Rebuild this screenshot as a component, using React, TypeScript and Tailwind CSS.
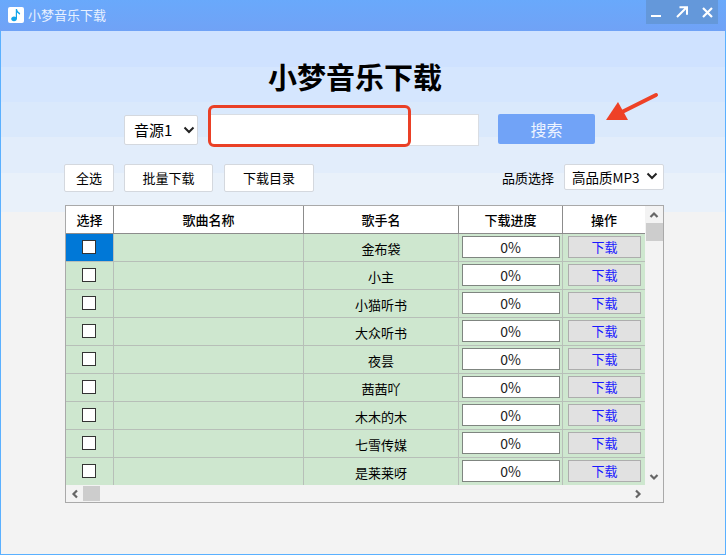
const font = { fontFamily: '"Noto Sans CJK SC", "Liberation Sans", sans-serif' };

const singers = ["金布袋", "小主", "小猫听书", "大众听书", "夜昙", "茜茜吖", "木木的木", "七雪传媒", "是莱莱呀"];

function Chevron({ className }: { className: string }) {
  return (
    <svg className={className} width="12" height="8" viewBox="0 0 12 8" fill="none">
      <path d="M1.500 1.500 6 6l4.500-4.500" stroke="#222" strokeWidth="2" />
    </svg>
  );
}

function ArrowGlyph({ d }: { d: string }) {
  return (
    <svg width="10" height="10" viewBox="0 0 10 10" fill="none">
      <path d={d} stroke="#666" strokeWidth="2.200" />
    </svg>
  );
}

function Btn({ w, children }: { w: string; children: string }) {
  return (
    <div className={`${w} h-[28px] flex items-center justify-center bg-white border border-[#d4d8de] rounded-[2px] text-[13px] text-black`}>
      {children}
    </div>
  );
}

export default function App() {
  return (
    <div className="w-[726px] h-[555px] overflow-hidden relative flex flex-col" style={font}>
      <div className="h-[31px] shrink-0 bg-gradient-to-b from-[#69a9fb] to-[#70a2f6] flex items-start">
        <div className="ml-[8px] mt-[7px] w-[16px] h-[16px] bg-white rounded-[2px] flex items-center justify-center">
          <svg width="14" height="14" viewBox="0 0 14 14">
            <path d="M6.800 1h1.200c.3 2 1.500 3 3.200 4.200l-.6 1.600C9.700 6 8.800 5.400 8 4.600V10.600C8 12.200 6.700 13.200 5 13.200S2.200 12.200 2.200 10.800 3.500 8.400 5 8.400c.7 0 1.300.2 1.800.5z" fill="#12a5ea" />
          </svg>
        </div>
        <div className="ml-[4px] mt-[5px] text-[13px] leading-[20px] text-[#e8f1ff]">小梦音乐下载</div>
        <div className="ml-auto mr-[8px] w-[72px] h-[24px] bg-[#6498da] flex items-center text-white">
          <svg className="ml-[5px]" width="10" height="12" viewBox="0 0 10 12"><path d="M0 9h10v2H0z" fill="#fff" /></svg>
          <svg className="ml-[15px]" width="12" height="12" viewBox="0 0 12 12" fill="none">
            <path d="M1 11 10 2M3.500 1.200H11v7.500" stroke="#fff" strokeWidth="2" />
          </svg>
          <svg className="ml-[14px]" width="11" height="11" viewBox="0 0 11 11" fill="none">
            <path d="M1 1l9 9M10 1l-9 9" stroke="#fff" strokeWidth="2.200" />
          </svg>
        </div>
      </div>

      <div className="flex-1 border-l border-r border-b border-[#5ab0ff] bg-[linear-gradient(to_bottom,#cfe2ff_0,#cfe2ff_36px,#d5e6fe_36px,#d5e6fe_71px,#dae9fc_71px,#dae9fc_106px,#e2edfb_106px,#e2edfb_142px,#e9f1fa_142px,#e9f1fa_181px,#f3f3f3_181px)]">
        <h1 className="h-[83px] pt-[23px] text-center text-[29px] leading-[44px] font-bold text-black pr-[16px]">小梦音乐下载</h1>

        <div className="flex items-start pl-[123px]">
          <div className="mt-[1px] w-[74px] h-[30px] bg-white border border-[#d4d8de] rounded-[2px] flex items-center text-[15px] text-black pl-[9px]">
            音源1
            <Chevron className="ml-[11px]" />
          </div>
          <div className="ml-[12px] w-[269px] h-[32px] bg-white border border-[#d9dde3]" />
          <div className="ml-[19px] w-[97px] h-[30px] bg-[#71a3f7] rounded-[2px] flex items-center justify-center text-[16px] text-[#eef4ff]">搜索</div>
        </div>

        <div className="mt-[18px] flex items-start pl-[63px]">
          <Btn w="w-[50px]">全选</Btn>
          <div className="ml-[10px]"><Btn w="w-[89px]">批量下载</Btn></div>
          <div className="ml-[11px]"><Btn w="w-[90px]">下载目录</Btn></div>
          <div className="ml-[188px] h-[28px] flex items-center text-[13px] text-black">品质选择</div>
          <div className="ml-[10px] w-[100px] h-[26px] bg-white border border-[#d4d8de] rounded-[2px] flex items-center text-[13.500px] text-black pl-[7px] whitespace-nowrap">
            高品质MP3
            <Chevron className="ml-[6px] -mt-[3px]" />
          </div>
        </div>

        <div className="mt-[13px] ml-[64px] w-[599px] h-[298px] border border-[#a9a9a9] bg-[#f3f3f3] flex flex-col">
          <div className="flex flex-1 min-h-0">
            <div className="w-[579px] overflow-hidden bg-[#cee7cf]">
              <div className="h-[28px] bg-white flex border-b border-[#8c8c8c] text-[13px] font-medium text-black">
                <div className="w-[48px] flex items-center justify-center border-r border-[#8c8c8c]">选择</div>
                <div className="w-[190px] flex items-center justify-center border-r border-[#8c8c8c]">歌曲名称</div>
                <div className="w-[155px] flex items-center justify-center border-r border-[#8c8c8c]">歌手名</div>
                <div className="w-[104px] flex items-center justify-center border-r border-[#8c8c8c]">下载进度</div>
                <div className="w-[82px] flex items-center justify-center">操作</div>
              </div>
              {singers.map((s, i) => (
                <div key={s} className="h-[28px] flex border-b border-[#b7bfb8] text-[13px] text-black">
                  <div className={`w-[48px] flex items-center justify-center border-r border-[#b7bfb8] ${i === 0 ? "bg-[#0078d7]" : ""}`}>
                    <div className="w-[14px] h-[14px] mb-[2px] mr-[2px] bg-white border border-[#333]" />
                  </div>
                  <div className="w-[190px] border-r border-[#b7bfb8]" />
                  <div className="w-[155px] pt-[2px] flex items-center justify-center border-r border-[#b7bfb8]">{s}</div>
                  <div className="w-[104px] flex items-center justify-center border-r border-[#b7bfb8]">
                    <div className="w-[98px] h-[22px] mb-[1px] bg-white border border-[#7f8580] flex items-center justify-center text-[14px] text-[#222]">0%</div>
                  </div>
                  <div className="w-[82px] flex items-center pl-[5px]">
                    <div className="w-[73px] h-[22px] mb-[1px] bg-[#e1e1e1] border border-[#adadad] flex items-center justify-center text-[13px] text-[#1a1aff]">下载</div>
                  </div>
                </div>
              ))}
            </div>
            <div className="w-[18px] flex flex-col items-center">
              <div className="h-[17px] flex items-center justify-center"><ArrowGlyph d="M1.500 7 5 3.500 8.500 7" /></div>
              <div className="w-[17px] h-[18px] bg-[#cdcdcd]" />
              <div className="mt-auto h-[17px] flex items-center justify-center"><ArrowGlyph d="M1.500 3 5 6.500 8.500 3" /></div>
            </div>
          </div>
          <div className="h-[17px] flex items-center">
            <div className="w-[17px] flex items-center justify-center"><ArrowGlyph d="M7 1.500 3.500 5 7 8.500" /></div>
            <div className="w-[17px] h-[15px] bg-[#cdcdcd]" />
            <div className="ml-[529px] w-[17px] flex items-center justify-center"><ArrowGlyph d="M3 1.500 6.500 5 3 8.500" /></div>
          </div>
        </div>
      </div>

      <div className="absolute left-[208px] top-[105px] w-[203px] h-[42px] border-[3px] border-[#ea4026] rounded-[6px]" />
      <svg className="absolute left-[600px] top-[88px]" width="62" height="38" viewBox="0 0 62 38">
        <path d="M56 7 20 25" stroke="#ee4126" strokeWidth="4" strokeLinecap="round" fill="none" />
        <path d="M6 32 18 14l10 18z" fill="#ee4126" />
      </svg>
    </div>
  );
}
